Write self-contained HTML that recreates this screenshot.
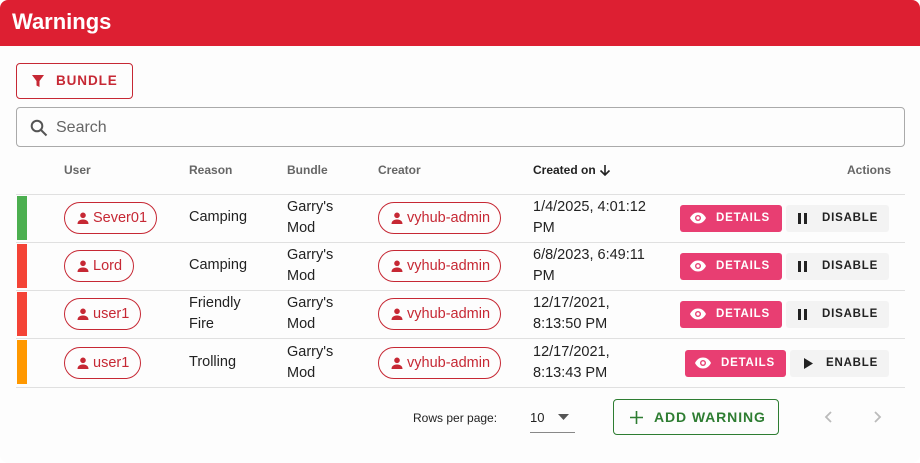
<!DOCTYPE html>
<html><head><style>
*{box-sizing:border-box;margin:0;padding:0}
body{width:920px;height:463px;background:#fff;font-family:"Liberation Sans",sans-serif;position:relative;overflow:hidden;color:#222}
.a{position:absolute}
.hdr{left:0;top:0;width:920px;height:46px;background:#dd1f32;border-radius:8px 8px 0 0}
.hdr span{position:absolute;left:12px;top:9px;color:#fff;font-size:22px;font-weight:bold}
.card{left:0;top:46px;width:920px;height:417px;background:#fdfdfd;border-radius:0 0 8px 8px}
.btnb{left:16px;top:63px;width:117px;height:36px;border:1px solid #c62834;border-radius:4px;color:#c62834;font-size:13.5px;font-weight:bold;letter-spacing:0.9px}
.search{left:16px;top:107px;width:889px;height:40px;border:1px solid #aaa;border-radius:4px}
.th{top:163px;font-size:12px;font-weight:bold;color:#666}
.line{left:16px;width:889px;height:1px;background:#e0e0e0}
.stripe{left:17px;width:10px;height:44px}
.chip{height:32px;border:1px solid #c62834;border-radius:16px;color:#c62834;font-size:14.5px;line-height:30px;padding-left:28px}
.chip svg{position:absolute;left:12px;top:9px}
.td{font-size:14.5px;line-height:21px;color:#222}
.det{height:27px;background:#e83e72;border-radius:3px;color:#fff;font-size:11.5px;font-weight:bold;letter-spacing:0.8px;line-height:27px;padding-left:36px}
.det svg{position:absolute;left:9px;top:7px}
.dis{height:27px;background:#f3f3f3;border-radius:3px;color:#222;font-size:11.5px;font-weight:bold;letter-spacing:0.8px;line-height:27px;padding-left:36px}
</style></head><body>
<div class="a hdr"><span>Warnings</span></div>
<div class="a card"></div>
<div class="a btnb"><svg class="a" style="left:14px;top:10px" width="14" height="14" viewBox="0 0 14 14"><path d="M1 1h12L8.5 7v6l-3-1.5V7z" fill="#c62834"/></svg><span class="a" style="left:39px;top:9px">BUNDLE</span></div>
<div class="a search"><svg class="a" style="left:13px;top:11px" width="18" height="18" viewBox="0 0 18 18"><circle cx="7" cy="7" r="5.3" fill="none" stroke="#555" stroke-width="2"/><path d="M11 11l5.5 5.5" stroke="#555" stroke-width="2"/></svg><span class="a" style="left:39px;top:11px;font-size:16px;color:#666">Search</span></div>
<div class="a th" style="left:64px">User</div>
<div class="a th" style="left:189px">Reason</div>
<div class="a th" style="left:287px">Bundle</div>
<div class="a th" style="left:378px">Creator</div>
<div class="a th" style="left:533px;color:#222">Created on <svg width="12" height="12" viewBox="0 0 12 12" style="vertical-align:-2px"><path d="M6 1v10M1.5 6.5 6 11l4.5-4.5" fill="none" stroke="#222" stroke-width="1.6"/></svg></div>
<div class="a th" style="left:847px">Actions</div>
<div class="a line" style="top:194px"></div>
<div class="a line" style="top:242px"></div>
<div class="a line" style="top:290px"></div>
<div class="a line" style="top:338px"></div>
<div class="a line" style="top:387px"></div>

<div class="a stripe" style="top:196px;background:#4caf50"></div>
<div class="a stripe" style="top:244px;background:#f44336"></div>
<div class="a stripe" style="top:292px;background:#f44336"></div>
<div class="a stripe" style="top:340px;background:#ff9800"></div>

<div class="a chip" style="left:64px;top:202px;width:93px"><svg width="12" height="12" viewBox="0 0 12 12"><circle cx="6" cy="3.3" r="2.8" fill="#c62834"/><path d="M0.5 12c0-3.5 3-4.5 5.5-4.5S11.5 8.5 11.5 12z" fill="#c62834"/></svg>Sever01</div>
<div class="a chip" style="left:64px;top:250px;width:70px"><svg width="12" height="12" viewBox="0 0 12 12"><circle cx="6" cy="3.3" r="2.8" fill="#c62834"/><path d="M0.5 12c0-3.5 3-4.5 5.5-4.5S11.5 8.5 11.5 12z" fill="#c62834"/></svg>Lord</div>
<div class="a chip" style="left:64px;top:298px;width:77px"><svg width="12" height="12" viewBox="0 0 12 12"><circle cx="6" cy="3.3" r="2.8" fill="#c62834"/><path d="M0.5 12c0-3.5 3-4.5 5.5-4.5S11.5 8.5 11.5 12z" fill="#c62834"/></svg>user1</div>
<div class="a chip" style="left:64px;top:347px;width:77px"><svg width="12" height="12" viewBox="0 0 12 12"><circle cx="6" cy="3.3" r="2.8" fill="#c62834"/><path d="M0.5 12c0-3.5 3-4.5 5.5-4.5S11.5 8.5 11.5 12z" fill="#c62834"/></svg>user1</div>

<div class="a td" style="left:189px;top:207px">Camping</div>
<div class="a td" style="left:189px;top:255px">Camping</div>
<div class="a td" style="left:189px;top:293px">Friendly<br>Fire</div>
<div class="a td" style="left:189px;top:352px">Trolling</div>

<div class="a td" style="left:287px;top:197px">Garry's<br>Mod</div>
<div class="a td" style="left:287px;top:245px">Garry's<br>Mod</div>
<div class="a td" style="left:287px;top:293px">Garry's<br>Mod</div>
<div class="a td" style="left:287px;top:342px">Garry's<br>Mod</div>

<div class="a chip" style="left:378px;top:202px;width:123px"><svg width="12" height="12" viewBox="0 0 12 12"><circle cx="6" cy="3.3" r="2.8" fill="#c62834"/><path d="M0.5 12c0-3.5 3-4.5 5.5-4.5S11.5 8.5 11.5 12z" fill="#c62834"/></svg>vyhub-admin</div>
<div class="a chip" style="left:378px;top:250px;width:123px"><svg width="12" height="12" viewBox="0 0 12 12"><circle cx="6" cy="3.3" r="2.8" fill="#c62834"/><path d="M0.5 12c0-3.5 3-4.5 5.5-4.5S11.5 8.5 11.5 12z" fill="#c62834"/></svg>vyhub-admin</div>
<div class="a chip" style="left:378px;top:298px;width:123px"><svg width="12" height="12" viewBox="0 0 12 12"><circle cx="6" cy="3.3" r="2.8" fill="#c62834"/><path d="M0.5 12c0-3.5 3-4.5 5.5-4.5S11.5 8.5 11.5 12z" fill="#c62834"/></svg>vyhub-admin</div>
<div class="a chip" style="left:378px;top:347px;width:123px"><svg width="12" height="12" viewBox="0 0 12 12"><circle cx="6" cy="3.3" r="2.8" fill="#c62834"/><path d="M0.5 12c0-3.5 3-4.5 5.5-4.5S11.5 8.5 11.5 12z" fill="#c62834"/></svg>vyhub-admin</div>

<div class="a td" style="left:533px;top:197px">1/4/2025, 4:01:12<br>PM</div>
<div class="a td" style="left:533px;top:245px">6/8/2023, 6:49:11<br>PM</div>
<div class="a td" style="left:533px;top:293px">12/17/2021,<br>8:13:50 PM</div>
<div class="a td" style="left:533px;top:342px">12/17/2021,<br>8:13:43 PM</div>

<div class="a det" style="left:680px;top:205px;width:102px"><svg width="18" height="12" viewBox="0 0 18 12"><path d="M1 6C3 2 6 0.5 9 0.5S15 2 17 6C15 10 12 11.5 9 11.5S3 10 1 6z" fill="#fff"/><circle cx="9" cy="6" r="3" fill="#e83e72"/><circle cx="9" cy="6" r="1.6" fill="#fff"/></svg>DETAILS</div>
<div class="a det" style="left:680px;top:253px;width:102px"><svg width="18" height="12" viewBox="0 0 18 12"><path d="M1 6C3 2 6 0.5 9 0.5S15 2 17 6C15 10 12 11.5 9 11.5S3 10 1 6z" fill="#fff"/><circle cx="9" cy="6" r="3" fill="#e83e72"/><circle cx="9" cy="6" r="1.6" fill="#fff"/></svg>DETAILS</div>
<div class="a det" style="left:680px;top:301px;width:102px"><svg width="18" height="12" viewBox="0 0 18 12"><path d="M1 6C3 2 6 0.5 9 0.5S15 2 17 6C15 10 12 11.5 9 11.5S3 10 1 6z" fill="#fff"/><circle cx="9" cy="6" r="3" fill="#e83e72"/><circle cx="9" cy="6" r="1.6" fill="#fff"/></svg>DETAILS</div>
<div class="a det" style="left:685px;top:350px;width:101px"><svg width="18" height="12" viewBox="0 0 18 12"><path d="M1 6C3 2 6 0.5 9 0.5S15 2 17 6C15 10 12 11.5 9 11.5S3 10 1 6z" fill="#fff"/><circle cx="9" cy="6" r="3" fill="#e83e72"/><circle cx="9" cy="6" r="1.6" fill="#fff"/></svg>DETAILS</div>

<div class="a dis" style="left:786px;top:205px;width:103px"><svg class="a" style="left:12px;top:8px" width="10" height="11"><rect x="0" width="3" height="11" fill="#222"/><rect x="6" width="3" height="11" fill="#222"/></svg>DISABLE</div>
<div class="a dis" style="left:786px;top:253px;width:103px"><svg class="a" style="left:12px;top:8px" width="10" height="11"><rect x="0" width="3" height="11" fill="#222"/><rect x="6" width="3" height="11" fill="#222"/></svg>DISABLE</div>
<div class="a dis" style="left:786px;top:301px;width:103px"><svg class="a" style="left:12px;top:8px" width="10" height="11"><rect x="0" width="3" height="11" fill="#222"/><rect x="6" width="3" height="11" fill="#222"/></svg>DISABLE</div>
<div class="a dis" style="left:790px;top:350px;width:99px"><svg class="a" style="left:14px;top:8px" width="10" height="11"><path d="M0 0L9 5.5 0 11z" fill="#222"/></svg>ENABLE</div>

<div class="a" style="left:413px;top:411px;font-size:12px;color:#222">Rows per page:</div>
<div class="a" style="left:530px;top:410px;font-size:13px;color:#222">10</div>
<svg class="a" style="left:558px;top:414px" width="11" height="6"><path d="M0 0h11L5.5 6z" fill="#555"/></svg>
<div class="a" style="left:530px;top:432px;width:45px;height:1px;background:#888"></div>
<div class="a" style="left:613px;top:399px;width:166px;height:36px;border:1px solid #2e7d32;border-radius:4px;color:#2e7d32;font-size:14px;font-weight:bold;letter-spacing:0.9px"><svg class="a" style="left:16px;top:11px" width="13" height="13"><path d="M6.5 0v13M0 6.5h13" stroke="#2e7d32" stroke-width="1.6"/></svg><span class="a" style="left:40px;top:9px">ADD WARNING</span></div>
<svg class="a" style="left:824px;top:411px" width="8" height="12"><path d="M7 1L2 6l5 5" fill="none" stroke="#bbb" stroke-width="1.8"/></svg>
<svg class="a" style="left:874px;top:411px" width="8" height="12"><path d="M1 1l5 5-5 5" fill="none" stroke="#bbb" stroke-width="1.8"/></svg>
</body></html>
